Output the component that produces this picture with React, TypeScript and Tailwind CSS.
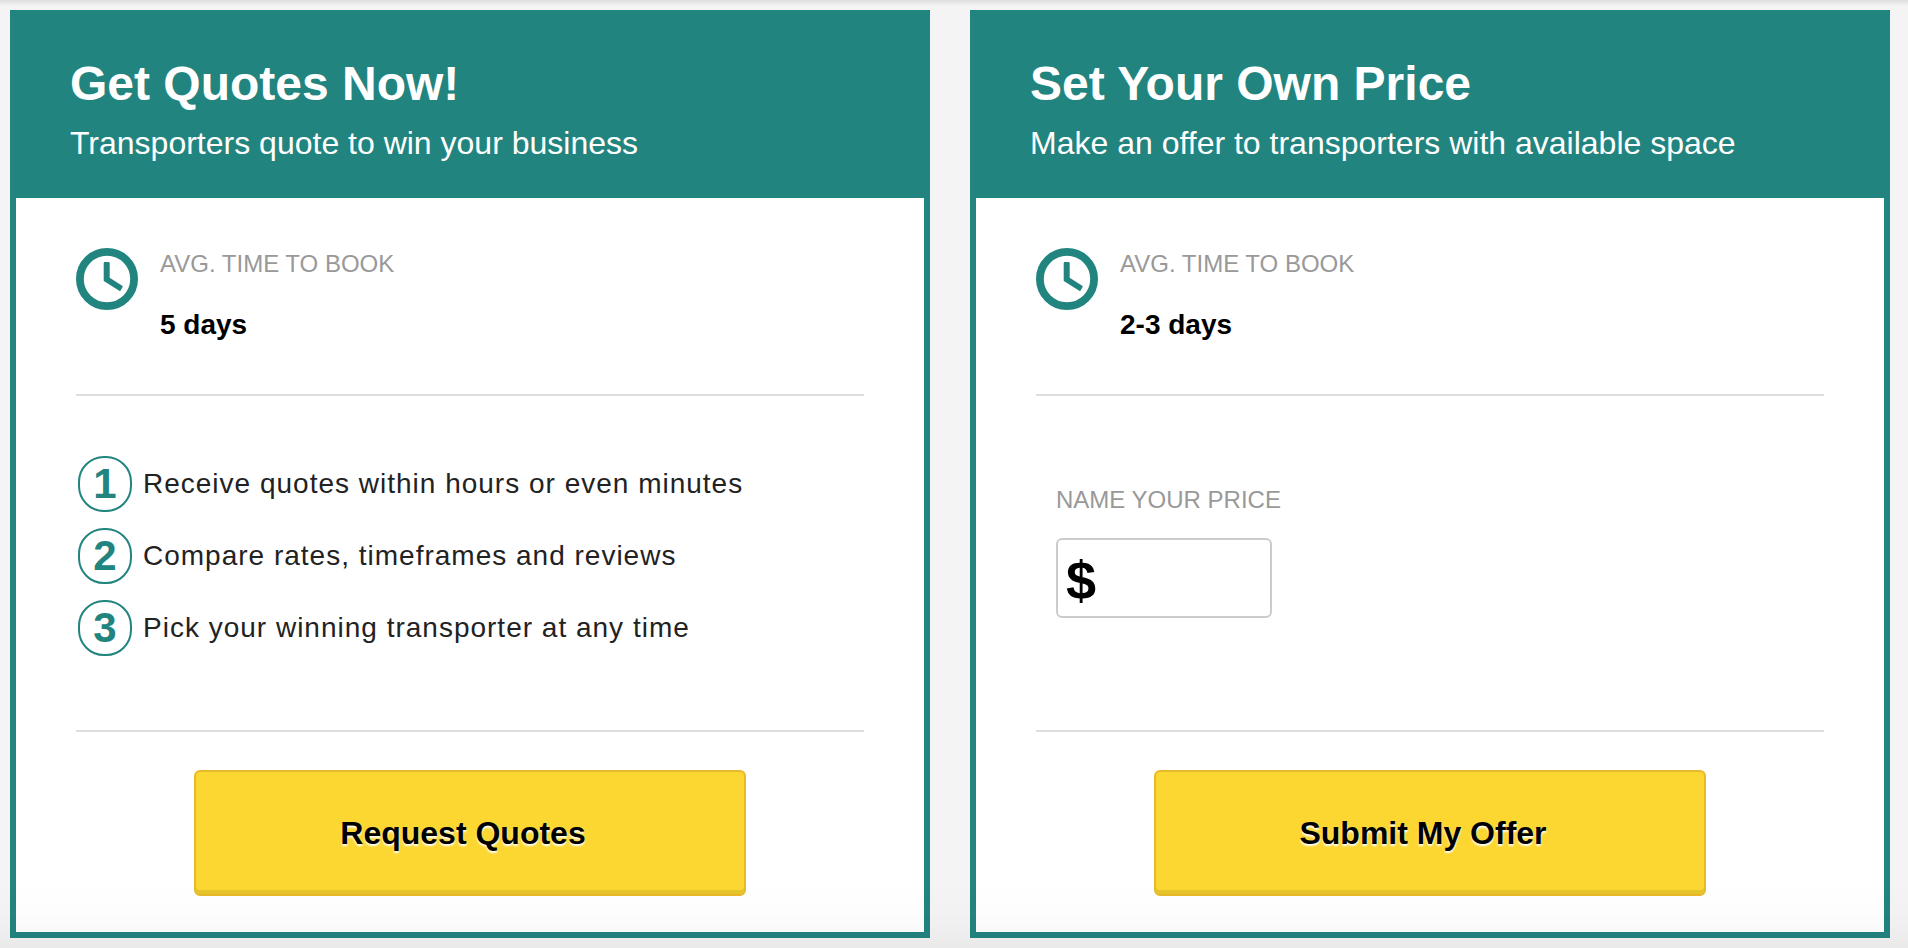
import { useState, type ReactNode } from "react";

const steps = [
  "Receive quotes within hours or even minutes",
  "Compare rates, timeframes and reviews",
  "Pick your winning transporter at any time",
];

function ClockIcon() {
  return (
    <svg viewBox="0 0 62 62" className="w-[62px] h-[62px] shrink-0 text-[#22847f]" aria-hidden="true">
      <circle cx="31" cy="31" r="27.1" fill="none" stroke="currentColor" strokeWidth="7.8" />
      <path
        d="M28.7 15 H32.7 V30.3 L45.7 38.6 L43.8 42 L28.7 32.4 Z"
        fill="currentColor" stroke="currentColor" strokeWidth="2" strokeLinejoin="round"
      />
    </svg>
  );
}

type OptionCardProps = {
  title: string;
  subtitle: string;
  time: string;
  action: string;
  children: ReactNode;
};

function OptionCard({ title, subtitle, time, action, children }: OptionCardProps) {
  return (
    <section className="flex flex-col bg-white border-[6px] border-[#22847f]">
      <header className="bg-[#22847f] text-white px-[54px] pt-10 pb-[35px]">
        <h2 className="text-5xl leading-[56px] font-bold">{title}</h2>
        <p className="mt-[11px] text-[32px] leading-[40px]">{subtitle}</p>
      </header>

      <div className="flex-1 flex flex-col px-[60px] pt-[50px] pb-9">
        <div className="flex items-start gap-[22px] pb-[53px]">
          <ClockIcon />
          <div>
            <p className="text-2xl text-[#999]">AVG. TIME TO BOOK</p>
            <p className="mt-[29px] text-[28px] leading-[32px] font-bold text-black">{time}</p>
          </div>
        </div>

        <div className="flex-1 border-y-2 border-[#ddd]">{children}</div>

        <button
          type="button"
          className="mt-[38px] self-center w-[552px] max-w-full h-[126px] pr-3.5 rounded-md border-2 border-[#e8b92b] bg-[#fcd731] text-[32px] font-bold text-black [text-shadow:0_2px_2px_#fff] shadow-[inset_0_-4px_0_#e6c42c] cursor-pointer"
        >
          {action}
        </button>
      </div>
    </section>
  );
}

export default function App() {
  const [price, setPrice] = useState("");

  return (
    <main className="relative min-h-screen pl-2.5 pr-[18px] py-2.5 bg-[#f4f4f4] font-['Liberation_Sans',Arial,sans-serif]">
      {/* header bar shadow */}
      <div className="absolute inset-x-0 top-0 h-1.5 bg-linear-to-b from-[#dedede] to-[#f4f4f4]" />

      <div className="grid grid-cols-2 gap-10">
        <OptionCard
          title="Get Quotes Now!"
          subtitle="Transporters quote to win your business"
          time="5 days"
          action="Request Quotes"
        >
          <ol className="flex flex-col gap-4 pl-0.5 pt-[60px] pb-[74px]">
            {steps.map((step, i) => (
              <li key={step} className="flex items-center gap-[11px]">
                <span className="w-[54px] h-14 shrink-0 flex items-center justify-center rounded-[26px] border-2 border-[#22847f] text-[42px] leading-none font-bold text-[#22847f]">
                  {i + 1}
                </span>
                <span className="text-[28px] leading-[34px] tracking-[1px] text-[#222]">{step}</span>
              </li>
            ))}
          </ol>
        </OptionCard>

        <OptionCard
          title="Set Your Own Price"
          subtitle="Make an offer to transporters with available space"
          time="2-3 days"
          action="Submit My Offer"
        >
          <div className="pl-5 pt-[88px]">
            <label htmlFor="price" className="block text-2xl text-[#999]">NAME YOUR PRICE</label>
            <div className="mt-[22px] w-[216px] h-20 px-2 pt-1 flex items-center rounded-md border-2 border-[#ccc] bg-white text-[54px] leading-none font-bold text-black">
              <span>$</span>
              <input
                id="price"
                type="text"
                inputMode="decimal"
                value={price}
                onChange={(e) => setPrice(e.target.value)}
                className="min-w-0 flex-1 h-full pl-1 text-[40px] focus:outline-none"
              />
            </div>
          </div>
        </OptionCard>
      </div>

      {/* bottom fade */}
      <div className="fixed inset-x-0 bottom-0 h-16 bg-linear-to-b from-black/0 via-black/1 to-black/4 pointer-events-none" />
    </main>
  );
}
